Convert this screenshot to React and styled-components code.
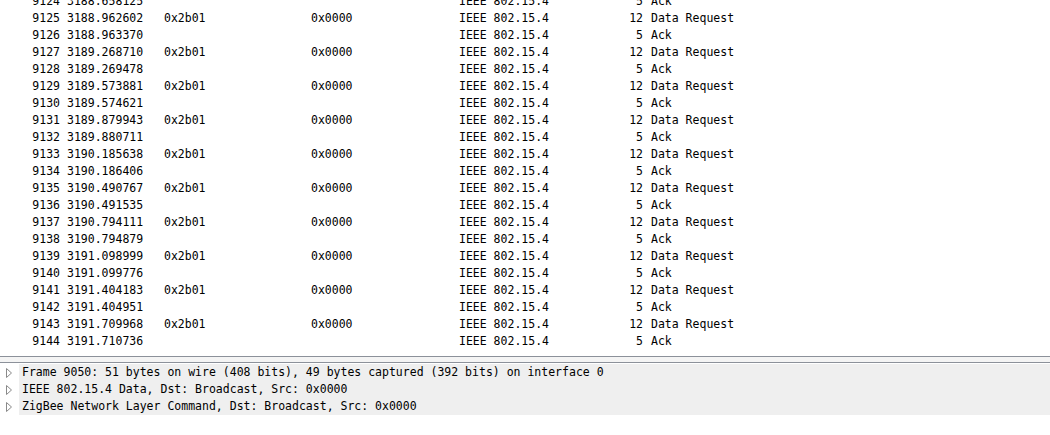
import React from "react";
import styled, { createGlobalStyle } from "styled-components";

const GlobalStyle = createGlobalStyle`
  html, body {
    margin: 0;
    padding: 0;
    background: #ffffff;
  }
  body {
    font-family: "DejaVu Sans Mono", "Liberation Mono", monospace;
    font-size: 11.5px;
    color: #000000;
  }
`;

const Page = styled.div`
  width: 1050px;
  height: 435px;
  overflow: hidden;
  display: flex;
  flex-direction: column;
  background: #ffffff;
`;

const PacketList = styled.div`
  height: 356px;
  overflow: hidden;
  display: flex;
  flex-direction: column;
`;

const Rows = styled.div`
  margin-top: -7px;
  display: flex;
  flex-direction: column;
`;

const Row = styled.div`
  display: grid;
  grid-template-columns: 64px 96px 147px 148px 142px 50px 1fr;
  height: 17px;
  line-height: 17px;
  white-space: pre;
`;

const Cell = styled.span`
  padding: ${(p) => (p.$right ? "0 4px 0 0" : "0 0 0 4px")};
  text-align: ${(p) => (p.$right ? "right" : "left")};
  overflow: hidden;
`;

const Splitter = styled.div`
  height: 5px;
  background: #f4f4f4;
  border-top: 1px solid #8c919a;
  border-bottom: 1px solid #8c919a;
  flex: none;
`;

const Details = styled.div`
  display: flex;
  flex-direction: column;
  padding-top: 1px;
`;

const TreeItem = styled.div`
  display: flex;
  align-items: center;
  height: 17px;
`;

const Expander = styled.span`
  width: 19px;
  height: 17px;
  display: flex;
  align-items: center;
  justify-content: center;
  flex: none;
  padding-right: 2px;
  box-sizing: border-box;
`;

const ItemText = styled.span`
  flex: 1;
  height: 17px;
  line-height: 17px;
  padding-left: 3px;
  background: #efefef;
  white-space: pre;
`;

const Arrow = () => (
  <svg width="8" height="12" viewBox="0 0 8 12">
    <path d="M1.5 1.5 L6.5 6 L1.5 10.5 Z" fill="none" stroke="#8a8a8a" strokeWidth="1" />
  </svg>
);

const packets = [];
const times = [
  "3188.658125", "3188.962602", "3188.963370", "3189.268710", "3189.269478",
  "3189.573881", "3189.574621", "3189.879943", "3189.880711", "3190.185638",
  "3190.186406", "3190.490767", "3190.491535", "3190.794111", "3190.794879",
  "3191.098999", "3191.099776", "3191.404183", "3191.404951", "3191.709968",
  "3191.710736",
];
times.forEach((t, i) => {
  const req = i % 2 === 1;
  packets.push({
    no: 9124 + i,
    time: t,
    src: req ? "0x2b01" : "",
    dst: req ? "0x0000" : "",
    proto: "IEEE 802.15.4",
    len: req ? "12" : "5",
    info: req ? "Data Request" : "Ack",
  });
});

const tree = [
  "Frame 9050: 51 bytes on wire (408 bits), 49 bytes captured (392 bits) on interface 0",
  "IEEE 802.15.4 Data, Dst: Broadcast, Src: 0x0000",
  "ZigBee Network Layer Command, Dst: Broadcast, Src: 0x0000",
];

export default function App() {
  return (
    <Page>
      <GlobalStyle />
      <PacketList>
        <Rows>
          {packets.map((p) => (
            <Row key={p.no}>
              <Cell $right>{p.no}</Cell>
              <Cell style={{ paddingLeft: 3 }}>{p.time}</Cell>
              <Cell>{p.src}</Cell>
              <Cell>{p.dst}</Cell>
              <Cell>{p.proto}</Cell>
              <Cell $right>{p.len}</Cell>
              <Cell>{p.info}</Cell>
            </Row>
          ))}
        </Rows>
      </PacketList>
      <Splitter />
      <Details>
        {tree.map((t) => (
          <TreeItem key={t}>
            <Expander>
              <Arrow />
            </Expander>
            <ItemText>{t}</ItemText>
          </TreeItem>
        ))}
      </Details>
    </Page>
  );
}
